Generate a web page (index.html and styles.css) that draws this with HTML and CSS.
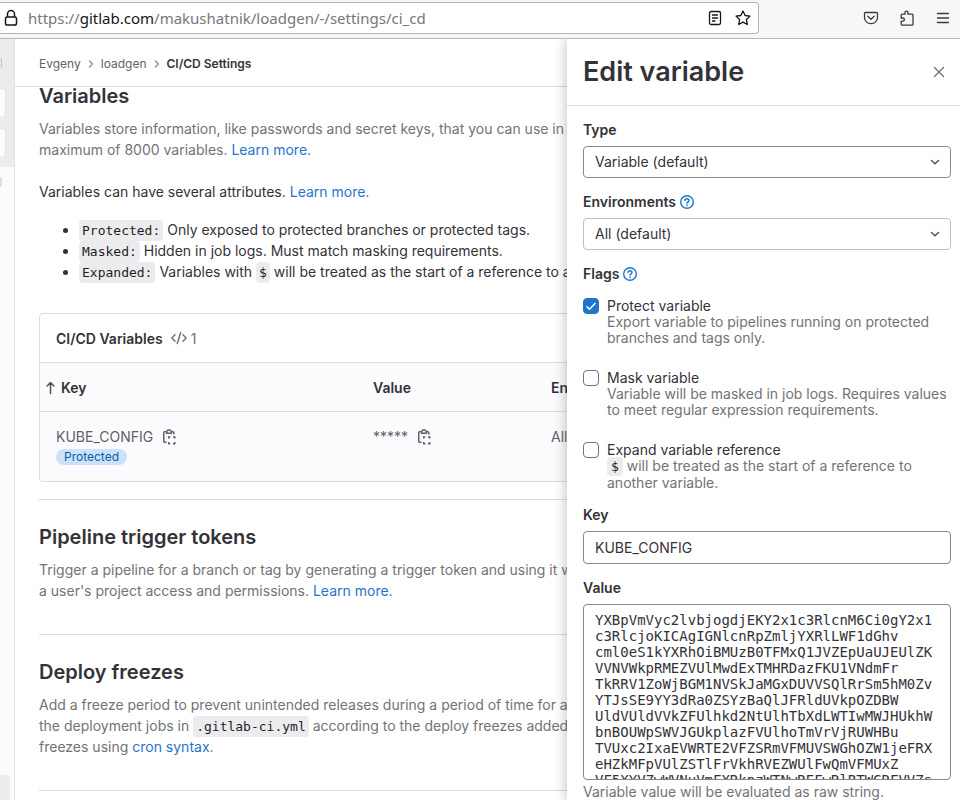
FILE: index.html
```html
<!DOCTYPE html>
<html lang="en">
<head>
<meta charset="utf-8">
<meta name="viewport" content="width=device-width, initial-scale=1">
<title>CI/CD Settings</title>
<link rel="stylesheet" href="styles.css">
</head>
<body>
<svg class="sprite" aria-hidden="true">
  <symbol id="chevron-down" viewBox="0 0 16 16"><path d="M4.500 6.500 8 9.700l3.500-3.200" fill="none" stroke="currentColor" stroke-width="1.500" stroke-linecap="round" stroke-linejoin="round"/></symbol>
  <symbol id="chevron-right" viewBox="0 0 12 12"><path d="M4.500 3 7.500 6l-3 3" fill="none" stroke="currentColor" stroke-width="1.200" stroke-linecap="round" stroke-linejoin="round"/></symbol>
  <symbol id="question" viewBox="0 0 16 16"><g fill="none" stroke="currentColor" stroke-width="1.400"><circle cx="8" cy="8" r="6.300"/><path d="M6 6.600c0-1.200.9-1.900 2-1.900s2 .7 2 1.800c0 1.300-2 1.500-2 2.700" stroke-linecap="round"/></g><circle cx="8" cy="11.300" r=".9" fill="currentColor"/></symbol>
  <symbol id="copy" viewBox="0 0 16 16"><g fill="none" stroke="currentColor" stroke-width="1.500"><path d="M5.500 13.250H3.500a.75.75 0 0 1-.75-.75v-9a.75.75 0 0 1 .75-.75h1.500M10.500 2.750H12a.75.75 0 0 1 .75.75V5.500"/><path d="M5.750 4.250v-2L7 1h2l1.250 1.250v2z"/><path d="M7.750 9.500V8h1.500M12 8h1.750v1.500M7.750 13v1.750h1.500M12 14.750h1.750V13"/></g></symbol>
</svg>

<header class="toolbar">
  <div class="address">
    <svg class="lock" viewBox="0 0 16 18" aria-hidden="true"><g fill="none" stroke="#15141a" stroke-width="1.500"><rect x="2.500" y="8" width="11" height="8" rx="1.800"/><path d="M4.500 8V5a3.500 3.500 0 0 1 7 0v3"/></g></svg>
    <a class="url" href="#">https://<span class="domain">gitlab.com</span>/makushatnik/loadgen/-/settings/ci_cd</a>
    <button class="tool" aria-label="Reader view"><svg viewBox="0 0 16 16"><g fill="none" stroke="#15141a" stroke-width="1.300" stroke-linecap="round"><rect x="2.500" y="1.500" width="11" height="13" rx="1.500"/><path d="M5.500 5h5M5.500 8h5M5.500 11h2.500"/></g></svg></button>
    <button class="tool" aria-label="Bookmark"><svg viewBox="0 0 16 16"><path d="M8 1l2.100 4.500 4.900.6-3.600 3.400.9 5L8 12.100l-4.300 2.400.9-5L1 6.100l4.900-.6z" fill="none" stroke="#15141a" stroke-width="1.300" stroke-linejoin="round"/></svg></button>
  </div>
  <nav class="tools" aria-label="Browser tools">
    <button class="tool" aria-label="Pocket"><svg viewBox="0 0 16 16"><path d="M2.500 2.500h11a1 1 0 0 1 1 1V7.500a6.500 6.200 0 0 1-13 0v-4a1 1 0 0 1 1-1zM4.800 6.300 8 9.300l3.200-3" fill="none" stroke="#3b3a42" stroke-width="1.300" stroke-linecap="round" stroke-linejoin="round"/></svg></button>
    <button class="tool" aria-label="Extensions"><svg viewBox="0 0 16 16"><path d="M2.200 5.200a1 1 0 0 1 1-1H6V2.600a1.500 1.500 0 0 1 3 0v1.600h4a1 1 0 0 1 1 1v9a1 1 0 0 1-1 1H3.200a1 1 0 0 1-1-1v-3h1.600a1.500 1.500 0 0 0 0-3.200H2.200z" fill="none" stroke="#3b3a42" stroke-width="1.300" stroke-linejoin="round"/></svg></button>
    <button class="tool" aria-label="Menu"><svg viewBox="0 0 16 16"><path d="M2.500 3.500h11M2.500 8h11M2.500 12.500h11" stroke="#3b3a42" stroke-width="1.300" stroke-linecap="round"/></svg></button>
  </nav>
</header>

<div class="page">
  <aside class="sidebar">
    <div class="sidebar-top">
      <span class="side-mark"></span>
      <span class="side-button"></span>
      <span class="side-button"></span>
    </div>
    <span class="side-avatar"></span>
    <span class="side-help"></span>
  </aside>

  <main class="main">
    <nav class="breadcrumbs" aria-label="Breadcrumbs">
      <a href="#">Evgeny</a>
      <svg class="crumb-arrow"><use href="#chevron-right"/></svg>
      <a href="#">loadgen</a>
      <svg class="crumb-arrow"><use href="#chevron-right"/></svg>
      <a class="current" href="#">CI/CD Settings</a>
    </nav>

    <div class="content">
      <section class="variables">
        <h2>Variables</h2>
        <p>Variables store information, like passwords and secret keys, that you can use in<br>maximum of 8000 variables. <a href="#">Learn more.</a></p>
        <p class="strong-text">Variables can have several attributes. <a href="#">Learn more.</a></p>
        <ul>
          <li><code>Protected:</code> Only exposed to protected branches or protected tags.</li>
          <li><code>Masked:</code> Hidden in job logs. Must match masking requirements.</li>
          <li><code>Expanded:</code> Variables with <code>$</code> will be treated as the start of a reference to a</li>
        </ul>
        <div class="card">
          <div class="card-header">
            <h3>CI/CD Variables</h3>
            <svg class="icon" viewBox="0 0 16 16" aria-hidden="true"><path d="M4 4.800.9 8 4 11.200M12 4.800 15.100 8 12 11.200M9.700 2.500 6.300 13.500" fill="none" stroke="currentColor" stroke-width="1.500" stroke-linecap="round" stroke-linejoin="round"/></svg>
            <span>1</span>
          </div>
          <table>
            <thead>
              <tr>
                <th class="col-key"><span class="sort"><svg viewBox="0 0 12 14" aria-hidden="true"><path d="M6 12.500V1.800M2.600 5 6 1.600 9.400 5" fill="none" stroke="#535158" stroke-width="1.500" stroke-linecap="round" stroke-linejoin="round"/></svg>Key</span></th>
                <th class="col-value">Value</th>
                <th>Environments</th>
              </tr>
            </thead>
            <tbody>
              <tr>
                <td>
                  <div class="cell-line">KUBE_CONFIG <button class="copy" aria-label="Copy key"><svg><use href="#copy"/></svg></button></div>
                  <span class="badge">Protected</span>
                </td>
                <td><div class="cell-line">***** <button class="copy" aria-label="Copy value"><svg><use href="#copy"/></svg></button></div></td>
                <td><div class="cell-line">All</div></td>
              </tr>
            </tbody>
          </table>
        </div>
      </section>

      <section class="setting">
        <h2>Pipeline trigger tokens</h2>
        <p>Trigger a pipeline for a branch or tag by generating a trigger token and using it with<br>a user's project access and permissions. <a href="#">Learn more.</a></p>
      </section>

      <section class="setting">
        <h2>Deploy freezes</h2>
        <p>Add a freeze period to prevent unintended releases during a period of time for a<br>the deployment jobs in <code>.gitlab-ci.yml</code> according to the deploy freezes added<br>freezes using <a href="#">cron syntax</a>.</p>
      </section>

      <hr>
    </div>
  </main>

  <form class="drawer" aria-label="Edit variable">
    <div class="drawer-header">
      <h2>Edit variable</h2>
      <button class="close" type="button" aria-label="Close"><svg viewBox="0 0 16 16"><path d="M3.500 3.500l9 9M12.500 3.500l-9 9" stroke="#737278" stroke-width="1.400" stroke-linecap="round"/></svg></button>
    </div>
    <div class="drawer-body">
      <div class="field">
        <label for="type">Type</label>
        <div class="select-box">
          <select id="type"><option>Variable (default)</option></select>
          <svg class="icon"><use href="#chevron-down"/></svg>
        </div>
      </div>
      <div class="field">
        <label for="environments">Environments <svg class="icon help"><use href="#question"/></svg></label>
        <button class="listbox" id="environments" type="button"><span>All (default)</span><svg class="icon"><use href="#chevron-down"/></svg></button>
      </div>
      <fieldset>
        <legend>Flags <svg class="icon help"><use href="#question"/></svg></legend>
        <div class="flag">
          <span class="tick"><input type="checkbox" id="protect" checked><svg viewBox="0 0 16 16" aria-hidden="true"><path d="M3.500 8.300l3 3 6-6.300" fill="none" stroke="#fff" stroke-width="1.500"/></svg></span>
          <div><label for="protect">Protect variable</label>
          <p>Export variable to pipelines running on protected branches and tags only.</p></div>
        </div>
        <div class="flag">
          <span class="tick"><input type="checkbox" id="mask"></span>
          <div><label for="mask">Mask variable</label>
          <p>Variable will be masked in job logs. Requires values to meet regular expression requirements.</p></div>
        </div>
        <div class="flag">
          <span class="tick"><input type="checkbox" id="expand"></span>
          <div><label for="expand">Expand variable reference</label>
          <p><code>$</code> will be treated as the start of a reference to another variable.</p></div>
        </div>
      </fieldset>
      <div class="field">
        <label for="key">Key</label>
        <input class="text-input" id="key" type="text" value="KUBE_CONFIG">
      </div>
      <div class="field">
        <label for="value">Value</label>
        <textarea id="value" rows="10" spellcheck="false">YXBpVmVyc2lvbjogdjEKY2x1c3RlcnM6Ci0gY2x1
c3RlcjoKICAgIGNlcnRpZmljYXRlLWF1dGhv
cml0eS1kYXRhOiBMUzB0TFMxQ1JVZEpUaUJEUlZK
VVNVWkpRMEZVUlMwdExTMHRDazFKU1VNdmFr
TkRRV1ZoWjBGM1NVSkJaMGxDUVVSQlRrSm5hM0Zv
YTJsSE9YY3dRa0ZSYzBaQlJFRldUVkpOZDBW
UldVUldVVkZFUlhkd2NtUlhTbXdLWTIwMWJHUkhW
bnBOUWpSWVJGUkplazFVUlhoTmVrVjRUWHBu
TVUxc2IxaEVWRTE2VFZSRmVFMUVSWGhOZW1jeFRX
eHZkMFpVUlZSTlFrVkhRVEZWUlFwQmVFMUxZ
VF5XYVZwWVNuVmFXRkpzWTNwREFwRlBTWGRFVVZs</textarea>
        <p>Variable value will be evaluated as raw string.</p>
      </div>
    </div>
  </form>
</div>
</body>
</html>
```
FILE: styles.css
```css
* { box-sizing: border-box; }

html { height: 100%; }

body {
  margin: 0;
  height: 100%;
  display: flex;
  flex-direction: column;
  overflow: hidden;
  background: #fff;
  color: #333238;
  font: 14px/21px Inter, "Liberation Sans", sans-serif;
}

h2, h3, p, ul { margin: 0; }
a { color: #1f75cb; text-decoration: none; }
button, input, select, textarea { font: inherit; color: inherit; }
button { border: 0; padding: 0; background: none; }
svg { display: block; }
.sprite { display: none; }
.icon { width: 16px; height: 16px; flex: none; }

code {
  font: 13px/13px "DejaVu Sans Mono", "Liberation Mono", monospace;
  padding: 3px;
  border-radius: 4px;
  background: #ececef;
  color: #1f1e24;
}

/* Browser toolbar */
.toolbar {
  flex: none;
  display: grid;
  grid-template-columns: minmax(0, 1fr) 201px;
  align-items: start;
  height: 39px;
  padding-top: 2px;
  background: #f7f7f7;
  border-bottom: 1px solid #b9b9bb;
}

.address {
  display: flex;
  align-items: center;
  gap: 12px;
  height: 32px;
  padding: 0 7px 0 3px;
  background: #fff;
  border: 1px solid #b4b4b6;
  border-left: 0;
  border-radius: 0 4px 4px 0;
}

.lock { width: 16px; height: 18px; flex: none; }

.url {
  flex: 1;
  margin-left: -3px;
  color: #77767b;
  font: 15px/20px "Noto Sans", "Open Sans", sans-serif;
  white-space: nowrap;
}

.domain { color: #15141a; }
.tool svg { width: 16px; height: 16px; }

.tools {
  display: flex;
  justify-content: flex-end;
  align-items: center;
  gap: 20px;
  height: 32px;
  padding-right: 9px;
}

/* Page frame */
.page {
  flex: 1;
  min-height: 0;
  display: flex;
  position: relative;
  overflow: hidden;
}

.sidebar {
  flex: none;
  display: flex;
  flex-direction: column;
  width: 15px;
  background: #fbfafd;
  border-right: 1px solid #e3e3e8;
}

.sidebar-top {
  display: flex;
  flex-direction: column;
  gap: 10px;
  height: 128px;
  padding-top: 19px;
  background: #ececef;
}

.side-mark {
  width: 2px;
  height: 10px;
  margin-bottom: 10px;
  border: 1px solid #bfbfc3;
  border-left: 0;
  border-radius: 0 2px 2px 0;
}

.side-button {
  width: 6px;
  height: 30px;
  background: #fbfafd;
  border: 1px solid #e3e3e8;
  border-left: 0;
  border-radius: 0 4px 4px 0;
}

.side-avatar {
  width: 2px;
  height: 10px;
  margin-top: 10px;
  background: #dcdcde;
  border-radius: 0 4px 4px 0;
}

.side-help {
  width: 10px;
  height: 25px;
  margin-top: auto;
  background: #ececef;
  border-radius: 0 4px 0 0;
}

.main { flex: 1; min-width: 0; }

.breadcrumbs {
  display: flex;
  align-items: center;
  gap: 4px;
  height: 48px;
  padding: 2px 24px 0;
  border-bottom: 1px solid #dcdcde;
  font-size: 12px;
}

.breadcrumbs a { color: #626168; }
.breadcrumbs .current { color: #333238; font-weight: 600; }
.crumb-arrow { width: 12px; height: 12px; color: #89888d; }

.content { padding: 0 24px; color: #737278; white-space: nowrap; }

.content h2 {
  color: #333238;
  font-size: 20px;
  font-weight: 600;
  line-height: 18px;
}

.content h2 + p { margin-top: 13px; }
.content .strong-text { margin-top: 21px; color: #333238; }

.content ul {
  margin-top: 17px;
  padding-left: 40px;
  color: #333238;
}

/* Variables table */
.card {
  margin: 31px 0 17px;
  border: 1px solid #dcdcde;
  border-radius: 4px;
  overflow: hidden;
}

.card-header {
  display: flex;
  align-items: center;
  gap: 4px;
  height: 49px;
  padding: 0 16px;
  border-bottom: 1px solid #dcdcde;
}

.card-header h3 {
  margin-right: 4px;
  color: #333238;
  font-size: 14px;
  font-weight: 600;
}

table {
  width: 100%;
  table-layout: fixed;
  border-collapse: separate;
  border-spacing: 0;
  background: #fbfafd;
}

th, td {
  padding: 14px 16px;
  text-align: left;
  vertical-align: top;
}

th {
  height: 49px;
  padding-bottom: 13px;
  color: #333238;
  font-weight: 600;
  border-bottom: 1px solid #dcdcde;
}

td { height: 69px; color: #626168; }
.col-key { width: 317px; }
.col-value { width: 178px; }

.sort { display: flex; align-items: center; gap: 4px; margin-left: -12px; }
.sort svg { width: 13px; height: 14px; }
.cell-line { display: flex; align-items: center; gap: 8px; }
.copy svg { width: 16px; height: 16px; }

.badge {
  display: block;
  width: max-content;
  margin-top: 2px;
  padding: 0 8px;
  border-radius: 8px;
  background: #cbe2f9;
  color: #0b5cad;
  font-size: 12px;
  line-height: 16px;
}

.setting { padding: 28px 0 33px; border-top: 1px solid #dcdcde; }
.content hr { margin: 0; border: 0; border-top: 1px solid #dcdcde; }

/* Drawer over the page */
.drawer {
  position: absolute;
  inset: 0 0 0 auto;
  width: 393px;
  overflow: hidden;
  background: #fff;
  box-shadow: 0 0 12px rgba(31, 30, 36, 0.32);
  line-height: 16px;
}

.drawer-header {
  display: flex;
  align-items: center;
  justify-content: space-between;
  height: 67px;
  padding: 0 13px 0 16px;
  border-bottom: 1px solid #dcdcde;
}

.drawer-header h2 { font-size: 27px; line-height: 32px; font-weight: 600; }
.close svg { width: 16px; height: 16px; }

.drawer-body {
  display: flex;
  flex-direction: column;
  gap: 16px;
  padding: 16px 9px 0 16px;
}

.field { display: flex; flex-direction: column; }

.field > label, legend {
  display: flex;
  align-items: center;
  gap: 3px;
  margin-bottom: 8px;
  font-weight: 600;
}

.help { color: #1f75cb; }
.drawer p { color: #737278; }

.select-box { display: grid; align-items: center; }
.select-box > * { grid-area: 1 / 1; }
.select-box .icon { justify-self: end; margin-right: 8px; pointer-events: none; }

select, .listbox, .text-input, textarea {
  width: 100%;
  padding: 0 11px;
  border: 1px solid #89888d;
  border-radius: 4px;
  background: #fff;
}

select { appearance: none; height: 32px; }

.listbox {
  display: flex;
  align-items: center;
  justify-content: space-between;
  height: 32px;
  padding-right: 7px;
  border-color: #bfbfc3;
}

.text-input { height: 33px; }

.listbox .icon, .select-box .icon { color: #535158; }

fieldset {
  display: flex;
  flex-direction: column;
  gap: 24px;
  min-width: 0;
  margin: 0;
  padding: 0;
  border: 0;
}

legend { padding: 0; margin-bottom: 16px; }
.flag { display: flex; gap: 8px; }
.flag label { display: block; }
.flag code { line-height: 16px; padding: 2px 4px; }

.tick { display: grid; flex: none; width: 16px; height: 16px; }
.tick > * { grid-area: 1 / 1; pointer-events: none; }

.tick input {
  appearance: none;
  width: 16px;
  height: 16px;
  margin: 0;
  border: 1px solid #737278;
  border-radius: 4px;
  background: #fff;
  pointer-events: auto;
}

.tick input:checked { background: #1f75cb; border-color: #1f75cb; }

textarea {
  display: block;
  height: 176px;
  margin-bottom: 4px;
  padding: 7px 11px;
  overflow: hidden;
  resize: none;
  white-space: pre;
  font: 14px/16px "DejaVu Sans Mono", "Liberation Mono", monospace;
}
```
